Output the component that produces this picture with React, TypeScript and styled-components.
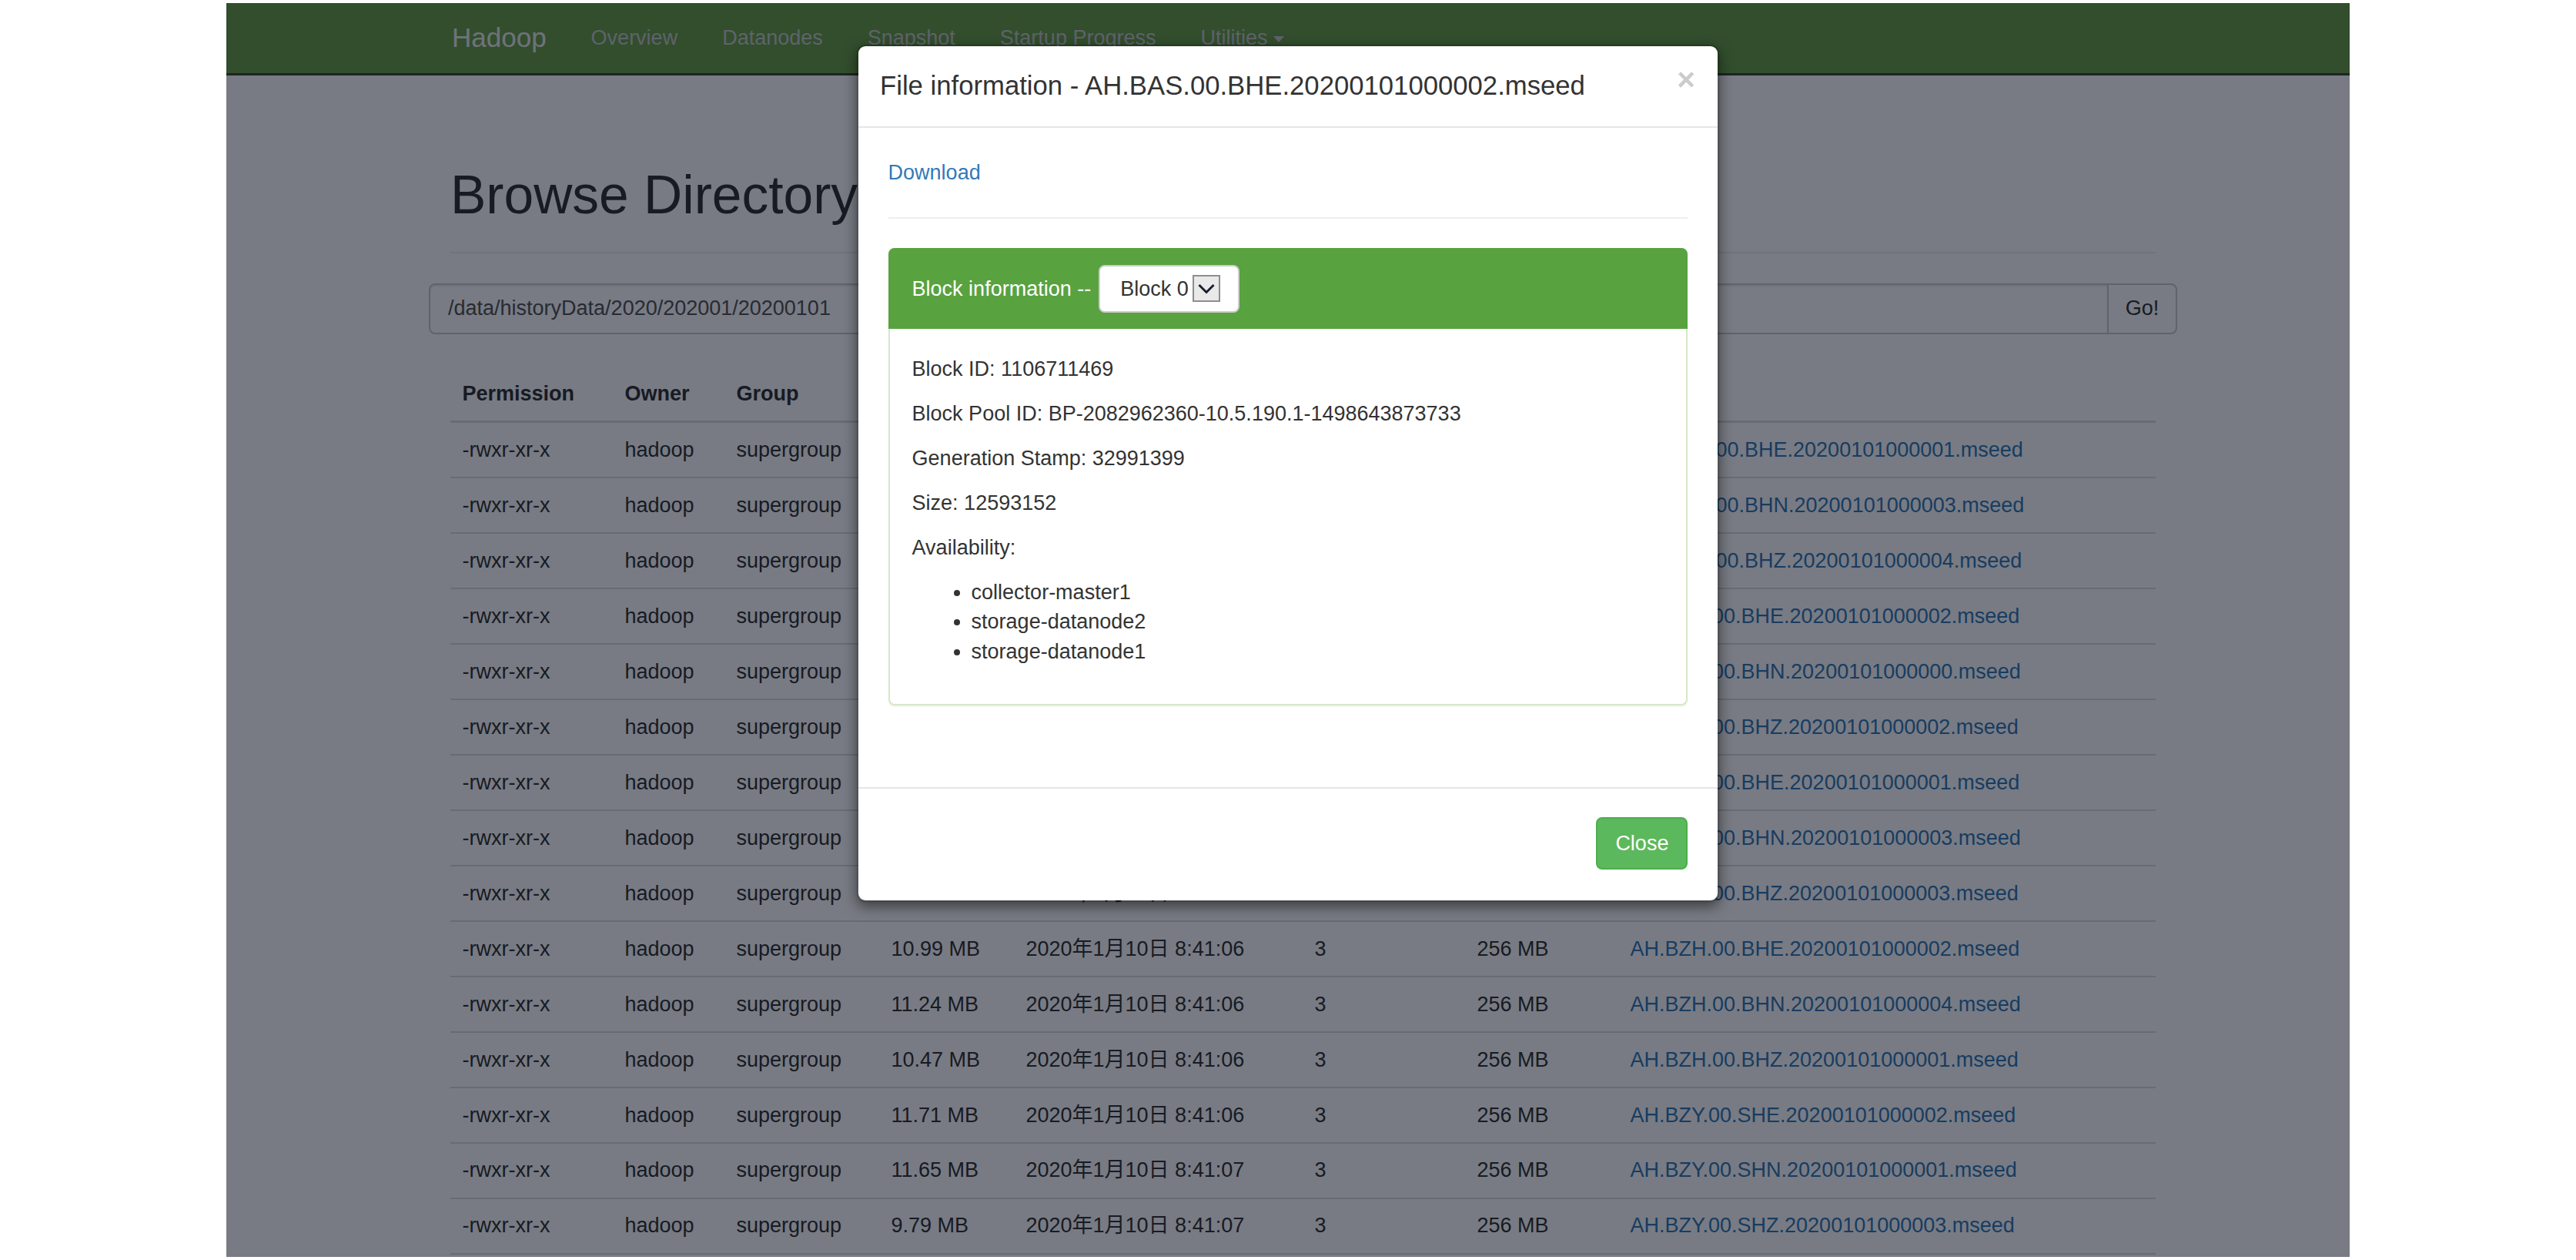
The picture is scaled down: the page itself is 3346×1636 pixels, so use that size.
import React from "react";
import styled, { createGlobalStyle } from "styled-components";

type FileRow = {
  size: string;
  modified: string;
  name: string;
};

const files: FileRow[] = [
  { size: "11.02 MB", modified: "2020年1月10日 8:41:05", name: "AH.ANQ.00.BHE.20200101000001.mseed" },
  { size: "11.36 MB", modified: "2020年1月10日 8:41:05", name: "AH.ANQ.00.BHN.20200101000003.mseed" },
  { size: "10.85 MB", modified: "2020年1月10日 8:41:05", name: "AH.ANQ.00.BHZ.20200101000004.mseed" },
  { size: "12.01 MB", modified: "2020年1月10日 8:41:05", name: "AH.BAS.00.BHE.20200101000002.mseed" },
  { size: "11.48 MB", modified: "2020年1月10日 8:41:05", name: "AH.BAS.00.BHN.20200101000000.mseed" },
  { size: "11.92 MB", modified: "2020年1月10日 8:41:06", name: "AH.BAS.00.BHZ.20200101000002.mseed" },
  { size: "10.63 MB", modified: "2020年1月10日 8:41:06", name: "AH.BBS.00.BHE.20200101000001.mseed" },
  { size: "10.71 MB", modified: "2020年1月10日 8:41:06", name: "AH.BBS.00.BHN.20200101000003.mseed" },
  { size: "10.58 MB", modified: "2020年1月10日 8:41:06", name: "AH.BBS.00.BHZ.20200101000003.mseed" },
  { size: "10.99 MB", modified: "2020年1月10日 8:41:06", name: "AH.BZH.00.BHE.20200101000002.mseed" },
  { size: "11.24 MB", modified: "2020年1月10日 8:41:06", name: "AH.BZH.00.BHN.20200101000004.mseed" },
  { size: "10.47 MB", modified: "2020年1月10日 8:41:06", name: "AH.BZH.00.BHZ.20200101000001.mseed" },
  { size: "11.71 MB", modified: "2020年1月10日 8:41:06", name: "AH.BZY.00.SHE.20200101000002.mseed" },
  { size: "11.65 MB", modified: "2020年1月10日 8:41:07", name: "AH.BZY.00.SHN.20200101000001.mseed" },
  { size: "9.79 MB", modified: "2020年1月10日 8:41:07", name: "AH.BZY.00.SHZ.20200101000003.mseed" },
  { size: "10.06 MB", modified: "2020年1月10日 8:41:07", name: "AH.CHZ.00.BHE.20200101000001.mseed" },
];

const columns = [
  { label: "Permission", width: 211 },
  { label: "Owner", width: 145 },
  { label: "Group", width: 201 },
  { label: "Size", width: 175 },
  { label: "Last Modified", width: 375 },
  { label: "Replication", width: 211 },
  { label: "Block Size", width: 199 },
  { label: "Name", width: 698 },
];

const locations = ["collector-master1", "storage-datanode2", "storage-datanode1"];

export default function App() {
  return (
    <>
      <GlobalStyle />
      <Frame>
        <Navbar>
          <NavInner>
            <Brand>Hadoop</Brand>
            <NavLink>Overview</NavLink>
            <NavLink>Datanodes</NavLink>
            <NavLink>Snapshot</NavLink>
            <NavLink>Startup Progress</NavLink>
            <NavLink>
              Utilities <Caret />
            </NavLink>
          </NavInner>
        </Navbar>

        <Container>
          <PageHeader>
            <Title>Browse Directory</Title>
          </PageHeader>

          <InputGroup onSubmit={(e) => e.preventDefault()}>
            <PathInput defaultValue="/data/historyData/2020/202001/20200101" />
            <GoButton type="button">Go!</GoButton>
          </InputGroup>

          <Listing>
            <colgroup>
              {columns.map((c) => (
                <Col key={c.label} $w={c.width} />
              ))}
            </colgroup>
            <thead>
              <tr>
                {columns.map((c) => (
                  <HeadCell key={c.label}>{c.label}</HeadCell>
                ))}
              </tr>
            </thead>
            <tbody>
              {files.map((f) => (
                <tr key={f.name}>
                  <Cell>-rwxr-xr-x</Cell>
                  <Cell>hadoop</Cell>
                  <Cell>supergroup</Cell>
                  <Cell>{f.size}</Cell>
                  <Cell>{f.modified}</Cell>
                  <Cell>3</Cell>
                  <Cell>256 MB</Cell>
                  <Cell>
                    <FileLink>{f.name}</FileLink>
                  </Cell>
                </tr>
              ))}
            </tbody>
          </Listing>
        </Container>

        <Backdrop>
          <ModalContent>
            <ModalHeader>
              <ModalTitle>File information - AH.BAS.00.BHE.20200101000002.mseed</ModalTitle>
              <CloseX type="button">×</CloseX>
            </ModalHeader>
            <ModalBody>
              <DownloadLink>Download</DownloadLink>
              <Rule />
              <Panel>
                <PanelHeading>
                  <span>Block information --</span>
                  <BlockSelect>
                    Block 0
                    <ArrowBox>
                      <svg width="22" height="14" viewBox="0 0 22 14">
                        <path d="M1.5 2 L11 11.5 L20.5 2" stroke="#1c1f2e" strokeWidth="3" fill="none" />
                      </svg>
                    </ArrowBox>
                  </BlockSelect>
                </PanelHeading>
                <PanelBody>
                  <Para>Block ID: 1106711469</Para>
                  <Para>Block Pool ID: BP-2082962360-10.5.190.1-1498643873733</Para>
                  <Para>Generation Stamp: 32991399</Para>
                  <Para>Size: 12593152</Para>
                  <Para>Availability:</Para>
                  <HostList>
                    {locations.map((h) => (
                      <li key={h}>{h}</li>
                    ))}
                  </HostList>
                </PanelBody>
              </Panel>
            </ModalBody>
            <ModalFooter>
              <CloseButton type="button">Close</CloseButton>
            </ModalFooter>
          </ModalContent>
        </Backdrop>
      </Frame>
    </>
  );
}

const GlobalStyle = createGlobalStyle`
  * {
    box-sizing: border-box;
  }

  html,
  body {
    margin: 0;
    padding: 0;
    background: #fff;
  }

  body {
    font-family: "Liberation Sans", Arial, "Noto Sans CJK SC", sans-serif;
    font-size: 27px;
    line-height: 38.6px;
    color: #333;
  }
`;

const Frame = styled.div`
  position: relative;
  width: 2758px;
  height: 1628px;
  margin: 4px 0 0 294px;
  overflow: hidden;
  background: #fff;
`;

const Navbar = styled.nav`
  height: 94px;
  background: #6a9f4a;
  border-bottom: 3px solid #3b4a33;
`;

const NavInner = styled.div`
  width: 2215px;
  height: 100%;
  margin-left: 291px;

  display: flex;
  align-items: center;
`;

const Brand = styled.a`
  padding: 0 29px 0 2px;
  font-size: 35px;
  color: #ececec;
`;

const NavLink = styled.a`
  padding: 0 29px;
  font-size: 27px;
  color: #cbcbcb;
  white-space: pre;
`;

const Caret = styled.span`
  display: inline-block;
  vertical-align: middle;
  border-top: 8px solid currentColor;
  border-left: 7.5px solid transparent;
  border-right: 7.5px solid transparent;
`;

const Container = styled.main`
  width: 2215px;
  margin-left: 291px;
  padding-top: 117px;
`;

const PageHeader = styled.div`
  padding-bottom: 17px;
  margin-bottom: 39px;
  border-bottom: 2px solid #eee;
`;

const Title = styled.h1`
  margin: 0 0 19px;
  font-size: 69.5px;
  line-height: 76px;
  font-weight: 500;
  color: #333;
`;

const InputGroup = styled.form`
  display: flex;
  margin: 0 -28px;
`;

const PathInput = styled.input`
  flex: 1;
  height: 65.6px;
  padding: 11.6px 23px;
  font-family: inherit;
  font-size: 27px;
  color: #555;
  background: #fff;
  border: 2px solid #ccc;
  border-radius: 8px 0 0 8px;
  box-shadow: inset 0 2px 2px rgba(0, 0, 0, 0.075);
  outline: none;
`;

const GoButton = styled.button`
  width: 91px;
  height: 65.6px;
  margin-left: -2px;
  font-family: inherit;
  font-size: 27px;
  color: #333;
  background: #fff;
  border: 2px solid #ccc;
  border-radius: 0 8px 8px 0;
`;

const Listing = styled.table`
  width: 100%;
  margin-top: 43px;
  border-collapse: collapse;
  table-layout: fixed;
`;

const Col = styled.col<{ $w: number }>`
  width: ${(p) => p.$w}px;
`;

const HeadCell = styled.th`
  padding: 15.5px;
  line-height: 38.6px;
  text-align: left;
  font-weight: bold;
  white-space: nowrap;
  border-bottom: 3px solid #ddd;
`;

const Cell = styled.td`
  padding: 15.7px 15.5px;
  line-height: 38.6px;
  white-space: nowrap;
  border-top: 2px solid #ddd;
`;

const FileLink = styled.a`
  color: #337ab7;
  text-decoration: none;
`;

const Backdrop = styled.div`
  position: absolute;
  inset: 0;
  padding-top: 54px;
  background: rgba(0, 6, 20, 0.53);

  display: flex;
  justify-content: center;
  align-items: flex-start;
`;

const ModalContent = styled.div`
  width: 1120px;
  background: #fff;
  background-clip: padding-box;
  border: 2px solid rgba(0, 0, 0, 0.2);
  border-radius: 11px;
  box-shadow: 0 6px 17px rgba(0, 0, 0, 0.5);
`;

const ModalHeader = styled.div`
  display: flex;
  justify-content: space-between;
  align-items: flex-start;
  padding: 27px 29px 27px 28px;
  border-bottom: 2px solid #e5e5e5;
`;

const ModalTitle = styled.h4`
  margin: 0;
  font-size: 34.7px;
  line-height: 49.6px;
  font-weight: 500;
  color: #333;
`;

const CloseX = styled.button`
  margin-top: -4px;
  padding: 0;
  font-family: inherit;
  font-size: 40.5px;
  font-weight: bold;
  line-height: 1;
  color: #000;
  opacity: 0.2;
  text-shadow: 0 2px 0 #fff;
  background: transparent;
  border: 0;
`;

const ModalBody = styled.div`
  padding: 39px 38.6px 38.6px;
`;

const DownloadLink = styled.a`
  color: #337ab7;
  text-decoration: none;
`;

const Rule = styled.hr`
  margin: 38.6px 0;
  border: 0;
  border-top: 2px solid #eee;
`;

const Panel = styled.div`
  margin-bottom: 38.6px;
  background: #fff;
  border: 2px solid #d6e9c6;
  border-radius: 8px;
  box-shadow: 0 2px 2px rgba(0, 0, 0, 0.05);
`;

const PanelHeading = styled.div`
  height: 105px;
  margin: -2px -2px 0;
  padding: 0 29px 0 31px;
  color: #fff;
  background: #59a240;
  border-radius: 8px 8px 0 0;

  display: flex;
  align-items: center;
  gap: 10px;
`;

const BlockSelect = styled.div`
  height: 62px;
  padding: 0 23px 0 26px;
  color: #333;
  background: #fff;
  border: 2px solid #ccc;
  border-radius: 8px;

  display: flex;
  align-items: center;
  gap: 5px;
`;

const ArrowBox = styled.span`
  width: 36px;
  height: 35px;
  background: #e9e9e9;
  border: 2px solid #8d8d8d;

  display: flex;
  align-items: center;
  justify-content: center;
`;

const PanelBody = styled.div`
  padding: 33px 29px 29px;
`;

const Para = styled.p`
  margin: 0 0 19.3px;
`;

const HostList = styled.ul`
  margin: 0 0 19.3px;
  padding-left: 77px;
`;

const ModalFooter = styled.div`
  margin-top: 29px;
  padding: 37px 38.6px 40px;
  border-top: 2px solid #e5e5e5;

  display: flex;
  justify-content: flex-end;
`;

const CloseButton = styled.button`
  padding: 12.5px 23px;
  font-family: inherit;
  font-size: 27px;
  line-height: 38.6px;
  color: #fff;
  background: #5cb85c;
  border: 2px solid #4cae4c;
  border-radius: 8px;
`;
